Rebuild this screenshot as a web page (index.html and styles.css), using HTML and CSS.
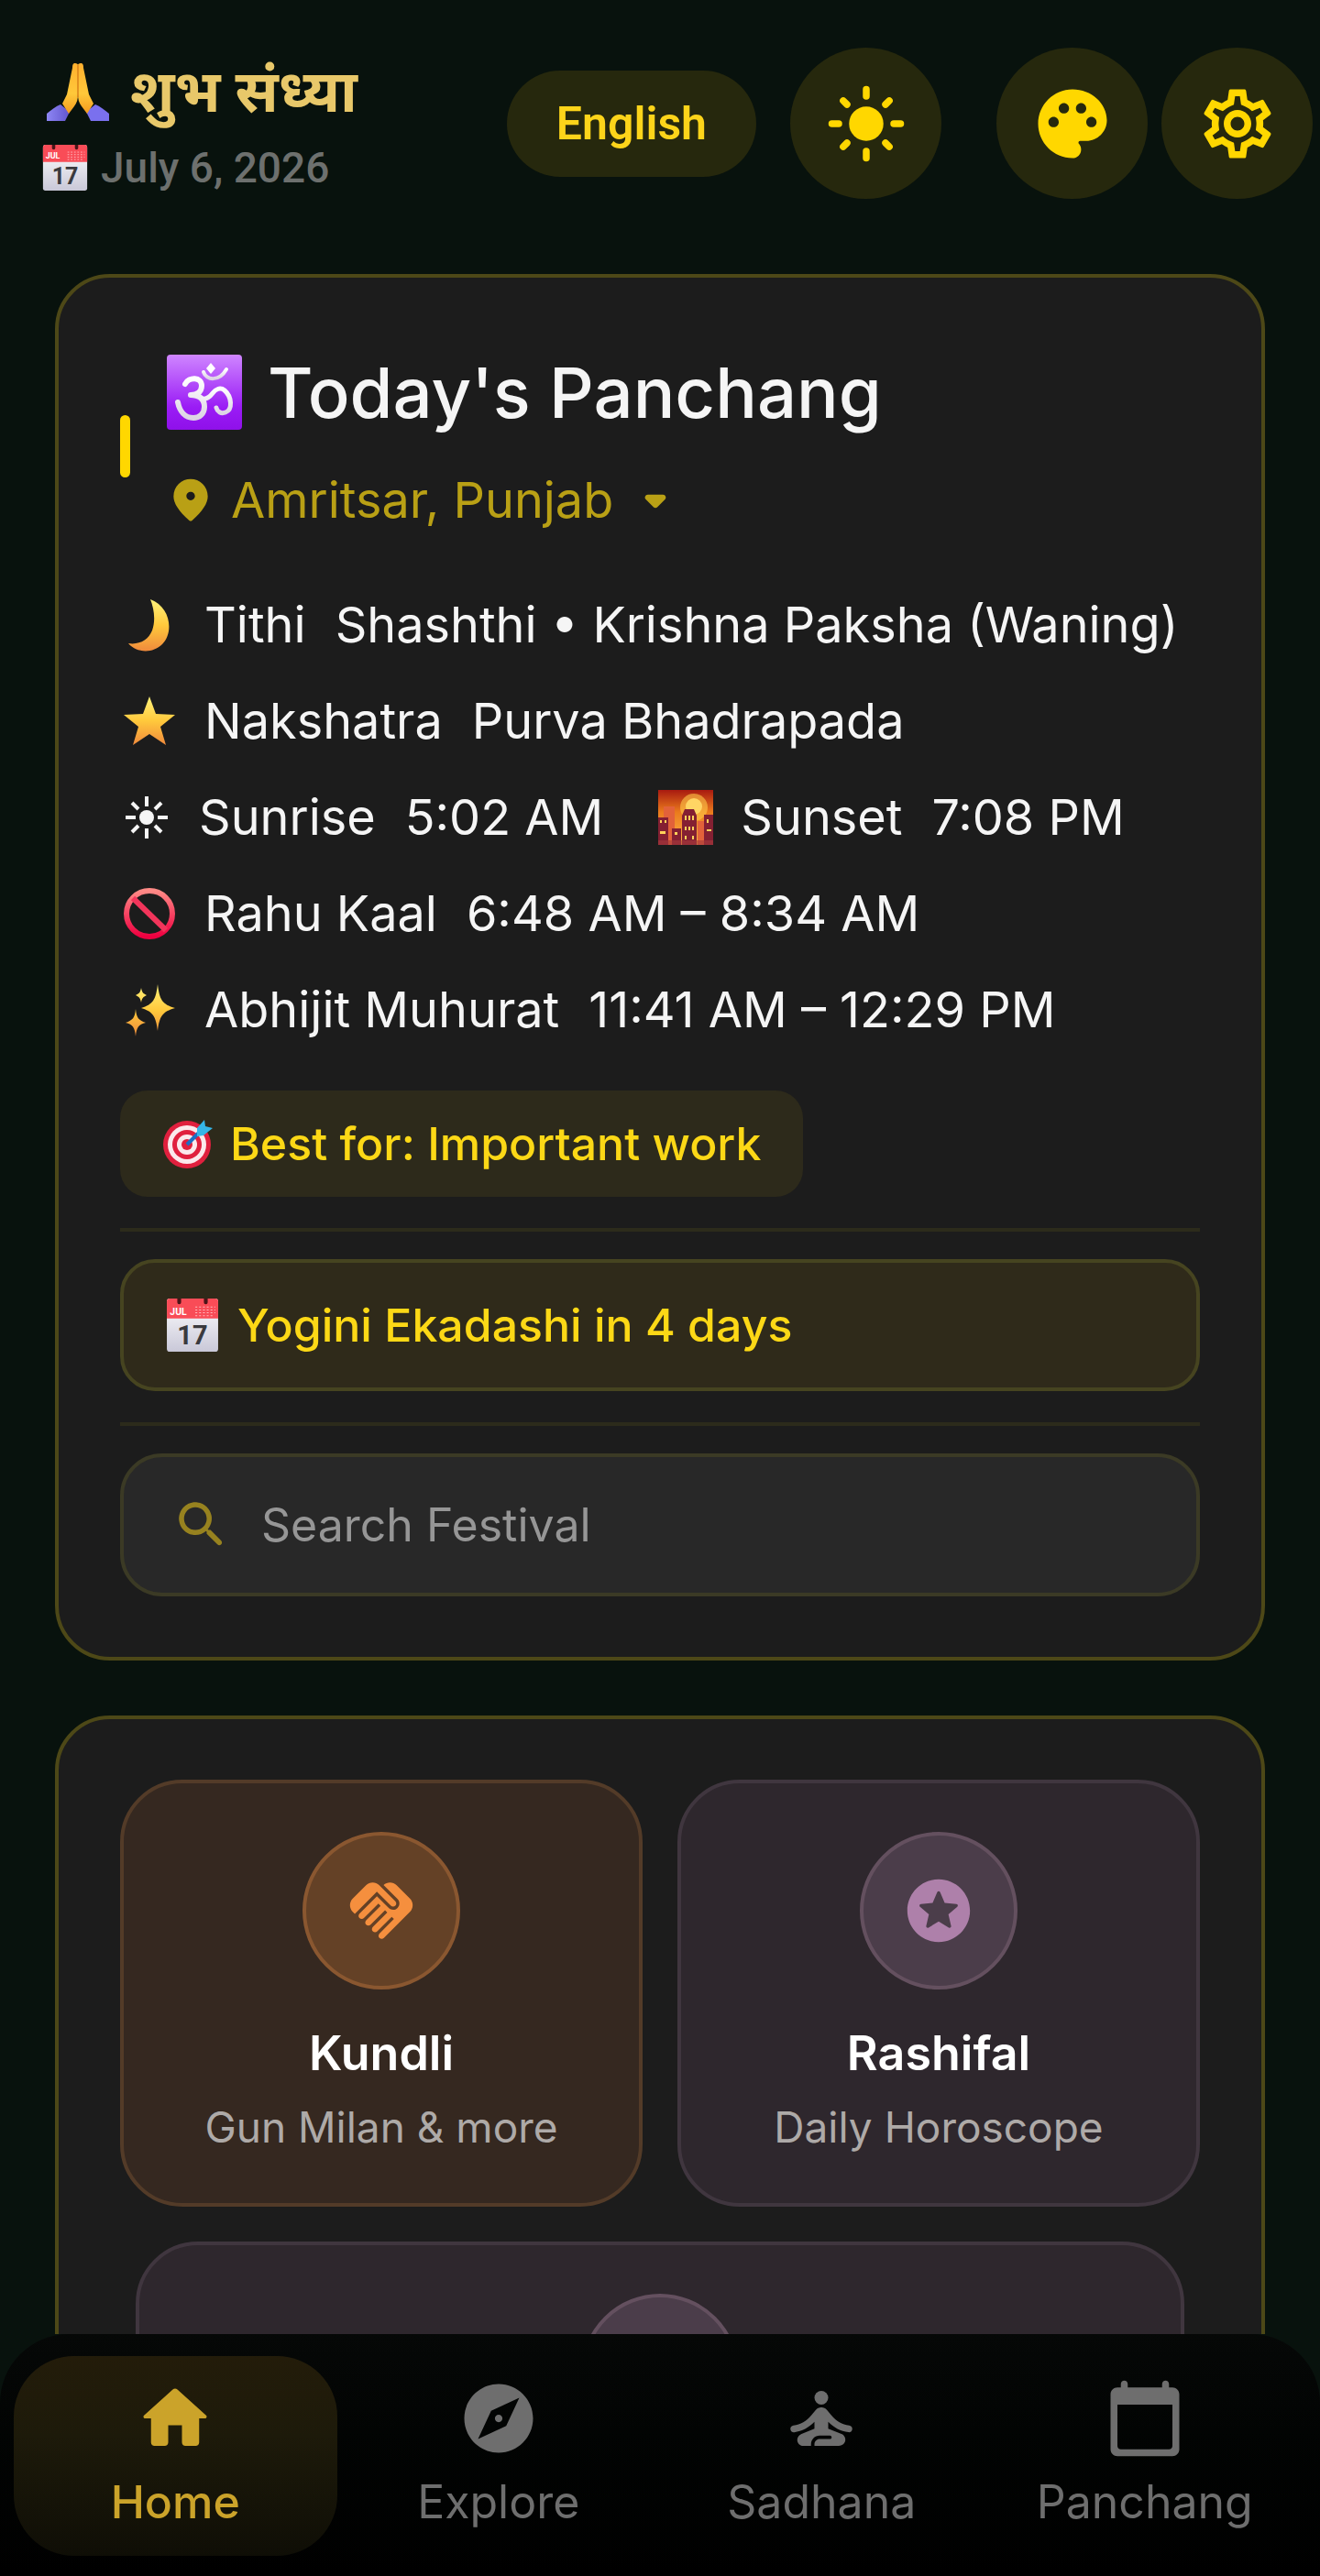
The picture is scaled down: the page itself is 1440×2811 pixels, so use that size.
FILE: index.html
```html
<!DOCTYPE html>
<html lang="en">
<head>
	<meta charset="utf-8">
	<meta name="viewport" content="width=device-width, initial-scale=1">
	<title>Today's Panchang</title>
	<link rel="stylesheet" href="styles.css">
</head>
<body>
	<!-- shared drawings -->
	<svg class="defs" width="0" height="0" aria-hidden="true">
		<defs>
			<linearGradient id="gold" x1="0" y1="0" x2="0" y2="1">
				<stop offset="0" stop-color="#fff27a"/>
				<stop offset="0.5" stop-color="#ffc93c"/>
				<stop offset="1" stop-color="#f08a3c"/>
			</linearGradient>
			<linearGradient id="skin" x1="0" y1="0" x2="0" y2="1">
				<stop offset="0" stop-color="#ffb02e"/>
				<stop offset="0.6" stop-color="#ffc83a"/>
				<stop offset="1" stop-color="#f39a1e"/>
			</linearGradient>
			<linearGradient id="sleeve" x1="0" y1="0" x2="1" y2="0">
				<stop offset="0" stop-color="#8d86f4"/>
				<stop offset="1" stop-color="#6255cc"/>
			</linearGradient>
			<linearGradient id="purple" x1="0" y1="0" x2="0" y2="1">
				<stop offset="0" stop-color="#cf86ff"/>
				<stop offset="0.7" stop-color="#9a1cf5"/>
				<stop offset="1" stop-color="#8f10ea"/>
			</linearGradient>
			<linearGradient id="omwhite" x1="0" y1="0" x2="0" y2="1">
				<stop offset="0" stop-color="#ffffff"/>
				<stop offset="1" stop-color="#dcd4e4"/>
			</linearGradient>
			<linearGradient id="paper" x1="0" y1="0" x2="0" y2="1">
				<stop offset="0" stop-color="#ffffff"/>
				<stop offset="1" stop-color="#c9c8d8"/>
			</linearGradient>
			<linearGradient id="ban" x1="0" y1="0" x2="0" y2="1">
				<stop offset="0" stop-color="#ff8a86"/>
				<stop offset="1" stop-color="#ee0040"/>
			</linearGradient>
			<linearGradient id="dusk" x1="0" y1="0" x2="0" y2="1">
				<stop offset="0" stop-color="#a81a10"/>
				<stop offset="0.4" stop-color="#ea7a1c"/>
				<stop offset="1" stop-color="#ffb648"/>
			</linearGradient>
			<symbol id="calendar" viewBox="0 0 56 56">
				<rect x="1" y="0" width="54" height="56" rx="3" fill="url(#paper)"/>
				<path d="M4 0h48a3 3 0 0 1 3 3v18H1V3a3 3 0 0 1 3-3z" fill="#f94c57"/>
				<path d="M12 0h4v4a2 2 0 0 1-4 0zM40 0h4v4a2 2 0 0 1-4 0z" fill="#4a1418"/>
				<path d="M31 9h21M31 12h21M31 15h21M31 18h18" stroke="#ffb9bd" stroke-width="1" stroke-dasharray="2 2"/>
				<text x="13" y="17" class="cal-month">JUL</text>
				<text x="28" y="48" class="cal-day">17</text>
			</symbol>
		</defs>
	</svg>

	<header class="topbar">
		<div class="greeting">
			<h1 class="greeting-text">
				<svg class="emoji-hands" viewBox="0 0 70 66" aria-hidden="true">
					<path d="M1 64v-8c5-4 10-8 15-10l10 8-5 10z" fill="url(#sleeve)"/>
					<path d="M69 64v-8c-5-4-10-8-15-10l-10 8 5 10z" fill="#7a70ee"/>
					<path d="M32 1c-2 0-3 1-3 5l-6 29-5 10 7 11 6-8c3-4 4-8 4-13V3c0-1-1-2-3-2z" fill="url(#skin)"/>
					<path d="M38 1c2 0 3 1 3 5l6 29 5 10-7 11-6-8c-3-4-4-8-4-13V3c0-1 1-2 3-2z" fill="url(#skin)"/>
					<path d="M35 3v35" stroke="#d9821a" stroke-width="1.5"/>
				</svg>
				<span lang="hi">शुभ संध्या</span>
			</h1>
			<p class="date"><svg class="emoji-date" aria-hidden="true"><use href="#calendar"/></svg>July 6, 2026</p>
		</div>
		<div class="actions">
			<button class="lang-button" type="button">English</button>
			<button class="round-button mode-button" type="button" aria-label="Light mode">
				<svg viewBox="0 0 24 24"><circle cx="12" cy="12" r="5"/><path class="rays" d="M12 2v2M12 20v2M2 12h2M20 12h2M5.3 5.3l1.1 1.1M17.6 17.6l1.1 1.1M18.7 5.3l-1.1 1.1M6.4 17.6l-1.1 1.1"/></svg>
			</button>
			<button class="round-button" type="button" aria-label="Theme colours">
				<svg viewBox="0 0 24 24"><path d="M12 2C6.49 2 2 6.49 2 12s4.49 10 10 10c1.38 0 2.5-1.12 2.5-2.5 0-.61-.23-1.2-.64-1.67-.08-.1-.13-.21-.13-.33 0-.28.22-.5.5-.5H16c3.31 0 6-2.69 6-6 0-4.96-4.49-9-10-9zm5.5 11c-.83 0-1.5-.67-1.5-1.5s.67-1.5 1.5-1.5 1.5.67 1.5 1.5-.67 1.5-1.5 1.5zm-3-4c-.83 0-1.5-.67-1.5-1.5S13.67 6 14.5 6s1.5.67 1.5 1.5S15.33 9 14.5 9zM5 11.5c0-.83.67-1.5 1.5-1.5s1.5.67 1.5 1.5S7.33 13 6.5 13 5 12.33 5 11.5zm6-4c0 .83-.67 1.5-1.5 1.5S8 8.33 8 7.5 8.67 6 9.5 6s1.5.67 1.5 1.5z"/></svg>
			</button>
			<button class="round-button" type="button" aria-label="Settings">
				<svg viewBox="0 0 24 24"><path d="M19.43 12.98c.04-.32.07-.64.07-.98s-.03-.66-.07-.98l2.11-1.65c.19-.15.24-.42.12-.64l-2-3.46c-.09-.16-.26-.25-.44-.25-.06 0-.12.01-.17.03l-2.49 1c-.52-.4-1.08-.73-1.69-.98l-.38-2.65C14.46 2.18 14.25 2 14 2h-4c-.25 0-.46.18-.49.42l-.38 2.65c-.61.25-1.17.59-1.69.98l-2.49-1c-.06-.02-.12-.03-.18-.03-.17 0-.34.09-.43.25l-2 3.46c-.13.22-.07.49.12.64l2.11 1.65c-.04.32-.07.65-.07.98s.03.66.07.98l-2.11 1.65c-.19.15-.24.42-.12.64l2 3.46c.09.16.26.25.44.25.06 0 .12-.01.17-.03l2.49-1c.52.4 1.08.73 1.69.98l.38 2.65c.03.24.24.42.49.42h4c.25 0 .46-.18.49-.42l.38-2.65c.61-.25 1.17-.59 1.69-.98l2.49 1c.06.02.12.03.18.03.17 0 .34-.09.43-.25l2-3.46c.12-.22.07-.49-.12-.64l-2.11-1.65zm-1.98-1.71c.04.31.05.52.05.73 0 .21-.02.43-.05.73l-.14 1.13.89.7 1.08.84-.7 1.21-1.27-.51-1.04-.42-.9.68c-.43.32-.84.56-1.25.73l-1.06.43-.16 1.13-.2 1.35h-1.4l-.19-1.35-.16-1.13-1.06-.43c-.43-.18-.83-.41-1.23-.71l-.91-.7-1.06.43-1.27.51-.7-1.21 1.08-.84.89-.7-.14-1.13c-.03-.31-.05-.54-.05-.74s.02-.43.05-.73l.14-1.13-.89-.7-1.08-.84.7-1.21 1.27.51 1.04.42.9-.68c.43-.32.84-.56 1.25-.73l1.06-.43.16-1.13.2-1.35h1.39l.19 1.35.16 1.13 1.06.43c.43.18.83.41 1.23.71l.91.7 1.06-.43 1.27-.51.7 1.21-1.07.85-.89.7.14 1.13zM12 8c-2.21 0-4 1.79-4 4s1.79 4 4 4 4-1.79 4-4-1.79-4-4-4zm0 6c-1.1 0-2-.9-2-2s.9-2 2-2 2 .9 2 2-.9 2-2 2z"/></svg>
			</button>
		</div>
	</header>

	<main class="content">
		<section class="card panchang">
			<div class="card-head">
				<span class="accent"></span>
				<div class="card-title">
					<h2>
						<svg class="emoji-om" viewBox="0 0 82 82" aria-hidden="true">
							<rect width="82" height="82" rx="4" fill="url(#purple)"/>
							<g fill="none" stroke="url(#omwhite)" stroke-linecap="round" stroke-linejoin="round">
								<path d="M20 32c4-8 18-8 18 2 0 8-7 10-12 10 8 0 15 3 15 13 0 8-6 12-12 12-9 0-15-7-17-17" stroke-width="6"/>
								<path d="M39 48c5 1 8-2 11-6s8-7 13-3c8 7 9 21 1 24-5 2-9-1-10-5" stroke-width="5"/>
								<path d="M40 19c3 9 17 11 25-3" stroke-width="4"/>
							</g>
							<path d="M48 9l5 6-5 6-5-6z" fill="#fff"/>
						</svg>
						Today's Panchang
					</h2>
					<button class="place" type="button">
						<svg class="pin" viewBox="0 0 24 24"><path d="M12 2c-4.2 0-8 3.22-8 8.2 0 3.18 2.45 6.92 7.34 11.23.38.33.95.33 1.33 0C17.55 17.12 20 13.38 20 10.2 20 5.22 16.2 2 12 2zm0 10c-1.1 0-2-.9-2-2s.9-2 2-2 2 .9 2 2-.9 2-2 2z"/></svg>
						Amritsar, Punjab
						<svg class="caret" viewBox="0 0 24 24"><path d="M8.71 11.71l2.59 2.59c.39.39 1.02.39 1.41 0l2.59-2.59c.63-.63.18-1.71-.71-1.71H9.41c-.89 0-1.33 1.08-.7 1.71z"/></svg>
					</button>
				</div>
			</div>

			<ul class="facts">
				<li>
					<svg class="emoji" viewBox="0 0 60 60" aria-hidden="true"><path d="M31 2c22 8 26 36 13 49-11 11-29 9-37-1 12 2 22-4 26-14 4-11 2-24-2-34z" fill="url(#gold)"/></svg>
					<span>Tithi</span><span>Shashthi • Krishna Paksha (Waning)</span>
				</li>
				<li>
					<svg class="emoji" viewBox="0 0 60 60" aria-hidden="true"><path d="M30 3l7 19 21 1-16 13 6 20-18-12-18 12 6-20L2 23l21-1z" fill="url(#gold)"/></svg>
					<span>Nakshatra</span><span>Purva Bhadrapada</span>
				</li>
				<li>
					<svg class="emoji sun" viewBox="0 0 52 60" aria-hidden="true"><circle cx="26" cy="30" r="8" fill="#f5f5f5"/><path d="M26 7v11M26 42v11M3 30h11M38 30h11M10 14l7 7M35 39l7 7M42 14l-7 7M17 39l-7 7" stroke="#f5f5f5" stroke-width="4"/></svg>
					<span>Sunrise</span><span>5:02 AM</span>
					<svg class="emoji city" viewBox="0 0 60 60" aria-hidden="true">
						<rect width="60" height="60" fill="url(#dusk)"/>
						<circle cx="39" cy="19" r="15" fill="#ffc94a" opacity=".6"/>
						<circle cx="39" cy="18" r="9" fill="#ffd564"/>
						<path d="M6 18h12v42H6zM43 34h9v26h-9z" fill="#e2623a"/>
						<path d="M0 30h11v30H0zM26 28l3-7h10l3 7v32H26zM15 42h10v18H15zM50 27h10v33H50z" fill="#842032"/>
						<path d="M29 28h2v5h-2zM33 28h2v5h-2zM37 28h2v5h-2zM29 40h2v4h-2zM33 40h2v4h-2zM37 40h2v4h-2zM29 50h2v4h-2zM37 50h2v4h-2zM2 33h2v3H2zM7 33h2v3H7zM2 45h6v3H2zM18 46h3v3h-3zM53 32h2v4h-2zM53 43h5v2h-5z" fill="#ffd25a"/>
						<path d="M0 55h60v5H0z" fill="#a53a3c" opacity=".6"/>
					</svg>
					<span>Sunset</span><span>7:08 PM</span>
				</li>
				<li>
					<svg class="emoji" viewBox="0 0 60 60" aria-hidden="true"><g fill="none" stroke="url(#ban)" stroke-width="6"><circle cx="30" cy="30" r="25"/><path d="M12 13l36 35" stroke="#f2355b"/></g></svg>
					<span>Rahu Kaal</span><span>6:48 AM – 8:34 AM</span>
				</li>
				<li>
					<svg class="emoji" viewBox="0 0 60 60" aria-hidden="true"><path d="M39 2c2 17 5 22 19 26-14 4-17 9-19 25-2-16-5-21-18-25 13-4 16-9 18-26zM15 29c1 10 3 12 11 15-8 2-10 5-11 15-1-10-3-13-11-15 8-3 10-5 11-15zM21 6c1 5 2 6 6 8-4 2-5 3-6 8-1-5-2-6-6-8 4-2 5-3 6-8z" fill="url(#gold)"/></svg>
					<span>Abhijit Muhurat</span><span>11:41 AM – 12:29 PM</span>
				</li>
			</ul>

			<p class="best">
				<svg class="emoji-target" viewBox="0 0 56 56" aria-hidden="true">
					<circle cx="27" cy="29" r="26" fill="#e0203e"/><circle cx="27" cy="29" r="21" fill="#fbe9ec"/><circle cx="27" cy="29" r="16" fill="#e0203e"/><circle cx="27" cy="29" r="11" fill="#fbe9ec"/><circle cx="27" cy="29" r="6" fill="#e0203e"/>
					<path d="M27 29L45 11" stroke="#1d6fc4" stroke-width="4"/>
					<path d="M38 11l8-9 1 7 8 2-10 8-7 1z" fill="#35b6e8"/>
				</svg>
				Best for: Important work
			</p>

			<hr>
			<p class="upcoming"><svg class="emoji-event" aria-hidden="true"><use href="#calendar"/></svg>Yogini Ekadashi in 4 days</p>
			<hr>

			<label class="search">
				<svg viewBox="0 0 24 24" aria-hidden="true"><path d="M15.5 14h-.79l-.28-.27c1.2-1.4 1.82-3.31 1.48-5.34-.47-2.78-2.79-5-5.59-5.34-4.23-.52-7.79 3.04-7.27 7.27.34 2.8 2.56 5.12 5.34 5.59 2.03.34 3.94-.28 5.34-1.48l.27.28v.79l4.25 4.25c.41.41 1.08.41 1.49 0 .41-.41.41-1.08 0-1.49L15.5 14zm-6 0C7.01 14 5 11.99 5 9.5S7.01 5 9.5 5 14 7.01 14 9.5 11.99 14 9.5 14z"/></svg>
				<input type="text" placeholder="Search Festival" aria-label="Search Festival">
			</label>
		</section>

		<section class="card services">
			<a class="tile orange" href="#kundli">
				<span class="tile-icon">
					<svg viewBox="0 0 24 24"><path d="M16.48 10.41c-.39.39-1.04.39-1.43 0l-4.47-4.46-7.05 7.04-.66-.63c-1.17-1.17-1.17-3.07 0-4.24l4.24-4.24c1.17-1.17 3.07-1.17 4.24 0L16.48 9c.39.39.39 1.02 0 1.41zm.7-2.12c.78.78.78 2.05 0 2.83-1.27 1.27-2.61.22-2.83 0l-3.76-3.76-5.57 5.57c-.39.39-.39 1.02 0 1.41.39.39 1.02.39 1.42 0l4.62-4.62.71.71-4.62 4.62c-.39.39-.39 1.02 0 1.41.39.39 1.02.39 1.42 0l4.62-4.62.71.71-4.62 4.62c-.39.39-.39 1.02 0 1.41.39.39 1.02.39 1.41 0l4.62-4.62.71.71-4.62 4.62c-.39.39-.39 1.02 0 1.41.39.39 1.02.39 1.41 0l8.32-8.34c1.17-1.17 1.17-3.07 0-4.24l-4.24-4.24c-1.15-1.15-3.01-1.17-4.18-.06l4.47 4.47z"/></svg>
				</span>
				<strong>Kundli</strong>
				<small>Gun Milan &amp; more</small>
			</a>
			<a class="tile purple" href="#rashifal">
				<span class="tile-icon">
					<svg viewBox="0 0 24 24"><path d="M11.99 2C6.47 2 2 6.48 2 12s4.47 10 9.99 10C17.52 22 22 17.52 22 12S17.52 2 11.99 2zm3.23 15.39L12 15.45l-3.22 1.94c-.38.23-.85-.11-.75-.54l.85-3.66-2.83-2.45c-.33-.29-.15-.84.29-.88l3.74-.32 1.46-3.45c.17-.41.75-.41.92 0l1.46 3.44 3.74.32c.44.04.62.59.28.88l-2.83 2.45.85 3.67c.1.43-.36.77-.74.54z"/></svg>
				</span>
				<strong>Rashifal</strong>
				<small>Daily Horoscope</small>
			</a>
			<a class="tile purple wide" href="#more" aria-label="More">
				<span class="tile-icon"></span>
			</a>
		</section>
	</main>

	<nav class="tabs">
		<a class="tab active" href="#home">
			<svg viewBox="0 0 24 24"><path d="M10 19v-5h4v5c0 .55.45 1 1 1h3c.55 0 1-.45 1-1v-7h1.7c.46 0 .68-.57.33-.87L12.67 3.6c-.38-.34-.96-.34-1.34 0l-8.36 7.53c-.34.3-.13.87.33.87H5v7c0 .55.45 1 1 1h3c.55 0 1-.45 1-1z"/></svg>
			Home
		</a>
		<a class="tab" href="#explore">
			<svg viewBox="0 0 24 24"><path d="M12 10.9c-.61 0-1.1.49-1.1 1.1s.49 1.1 1.1 1.1c.61 0 1.1-.49 1.1-1.1s-.49-1.1-1.1-1.1zM12 2C6.48 2 2 6.48 2 12s4.48 10 10 10 10-4.48 10-10S17.52 2 12 2zm2.19 12.19L6 18l3.81-8.19L18 6l-3.81 8.19z"/></svg>
			Explore
		</a>
		<a class="tab" href="#sadhana">
			<svg viewBox="0 0 24 24"><circle cx="12" cy="6" r="2"/><path d="M21 15.04c0-.51-.37-.93-.87-.99-2.11-.27-3.78-1.28-5.18-2.95l-1.34-1.6c-.38-.46-.94-.72-1.53-.72h-.15c-.59 0-1.15.26-1.53.72l-1.34 1.6c-1.4 1.67-3.07 2.68-5.19 2.95-.5.06-.87.48-.87.99 0 .6.52 1.07 1.12 1 2.3-.29 4.21-1.33 5.88-3.03V15l-3.76 1.5c-.65.26-1.15.85-1.23 1.55-.12 1.06.7 1.95 1.73 1.95H9v-.5c0-1.38 1.12-2.5 2.5-2.5h3c.28 0 .5.22.5.5s-.22.5-.5.5h-3c-.83 0-1.5.67-1.5 1.5v.5h7.1c.85 0 1.65-.55 1.85-1.38.21-.89-.26-1.77-1.08-2.1L14 15v-1.99c1.67 1.7 3.57 2.73 5.88 3.02.6.08 1.12-.39 1.12-.99z"/></svg>
			Sadhana
		</a>
		<a class="tab" href="#panchang">
			<svg viewBox="0 0 24 24"><path d="M20 3h-1V2c0-.55-.45-1-1-1s-1 .45-1 1v1H7V2c0-.55-.45-1-1-1s-1 .45-1 1v1H4c-1.1 0-2 .9-2 2v16c0 1.1.9 2 2 2h16c1.1 0 2-.9 2-2V5c0-1.1-.9-2-2-2zm-1 18H5c-.55 0-1-.45-1-1V8h16v12c0 .55-.45 1-1 1z"/></svg>
			Panchang
		</a>
	</nav>
</body>
</html>
```

FILE: styles.css
```css
* {
	box-sizing: border-box;
}
body {
	margin: 0;
	height: 100vh;
	display: flex;
	flex-direction: column;
	overflow: hidden;
	background: #08120d;
	color: #f5f5f5;
	font-family: Inter, Roboto, sans-serif;
	font-size: 54px;
	line-height: 64px;
}
h1, h2, p, ul {
	margin: 0;
	padding: 0;
}
a {
	color: inherit;
	text-decoration: none;
}
button {
	border: 0;
	padding: 0;
	background: none;
	font: inherit;
	cursor: pointer;
}
svg {
	display: block;
	flex: none;
	fill: currentColor;
}
.defs {
	position: absolute;
}

/* header */
.topbar {
	display: flex;
	justify-content: space-between;
	align-items: center;
	padding: 52px 8px 82px 46px;
}
.greeting {
	display: flex;
	flex-direction: column;
	gap: 8px;
	padding-top: 4px;
}
.greeting-text {
	display: flex;
	align-items: center;
	gap: 22px;
	color: #e8c86a;
	font-family: Roboto, "Noto Sans Devanagari", "Noto Sans", sans-serif;
	font-size: 64px;
	font-weight: 700;
	line-height: 84px;
}
.emoji-hands {
	width: 70px;
	height: 66px;
	margin-left: 4px;
}
.date {
	display: flex;
	align-items: center;
	gap: 14px;
	color: #6d706e;
	font-family: Roboto, sans-serif;
	font-size: 46px;
	font-weight: 500;
}
.emoji-date {
	width: 50px;
	height: 50px;
}
.actions {
	display: flex;
	align-items: center;
	gap: 15px;
	color: #ffd700;
}
.lang-button {
	padding: 26px 54px;
	border-radius: 58px;
	background: #26280d;
	color: #fcd41a;
	font-family: Roboto, sans-serif;
	font-size: 50px;
	font-weight: 600;
}
.round-button {
	display: flex;
	align-items: center;
	justify-content: center;
	width: 165px;
	height: 165px;
	border-radius: 50%;
	background: #26280d;
	color: #ffd700;
}
.round-button svg {
	width: 90px;
	height: 90px;
}
.mode-button {
	margin: 0 45px 0 22px;
}
.rays {
	fill: none;
	stroke: currentColor;
	stroke-width: 2;
	stroke-linecap: round;
}

/* cards */
.content {
	flex: 1;
	min-height: 0;
	overflow: hidden;
	padding: 0 60px;
}
.card {
	border: 4px solid #4d4817;
	border-radius: 60px;
	background: #1c1c1c;
	padding: 66px 67px;
	margin-bottom: 60px;
}
.card-head {
	display: flex;
	align-items: center;
	gap: 38px;
}
.accent {
	width: 11px;
	height: 68px;
	border-radius: 6px;
	background: #ffd700;
}
.card-title h2 {
	display: flex;
	align-items: center;
	gap: 28px;
	font-size: 76px;
	font-weight: 500;
	line-height: 118px;
}
.emoji-om {
	width: 82px;
	height: 82px;
	margin-left: 2px;
}
.place {
	display: flex;
	align-items: center;
	height: 118px;
	color: #b9a015;
}
.pin {
	width: 56px;
	height: 56px;
	margin-right: 16px;
}
.caret {
	width: 76px;
	height: 76px;
	margin-left: 8px;
}

.facts {
	list-style: none;
	padding-top: 24px;
}
.facts li {
	display: flex;
	align-items: center;
	height: 105px;
	white-space: nowrap;
}
.facts span + span {
	margin-left: 32px;
}
.emoji {
	width: 60px;
	height: 60px;
	margin: 0 30px 0 2px;
}
.sun {
	width: 54px;
}
.city {
	margin-left: 60px;
}

.best {
	display: flex;
	align-items: center;
	gap: 18px;
	width: fit-content;
	margin-top: 36px;
	padding: 26px 46px;
	border-radius: 30px;
	background: #2d2a1b;
	color: #fcd816;
	font-size: 50px;
	font-weight: 500;
}
.emoji-target {
	width: 56px;
	height: 56px;
}
hr {
	height: 4px;
	margin: 34px 0 30px;
	border: 0;
	background: #2c2b1b;
}
.upcoming {
	display: flex;
	align-items: center;
	gap: 20px;
	padding: 36px 46px;
	border: 4px solid #464420;
	border-radius: 38px;
	background: #2f2a1a;
	color: #fcd816;
	font-size: 50px;
	font-weight: 500;
}
.emoji-event {
	width: 58px;
	height: 58px;
}
.cal-month {
	fill: #fff;
	font: 700 10px Roboto, sans-serif;
	text-anchor: middle;
}
.cal-day {
	fill: #3a3a3e;
	font: 700 28px Roboto, sans-serif;
	text-anchor: middle;
}
.search {
	display: flex;
	align-items: center;
	gap: 32px;
	padding: 41px 52px;
	border: 4px solid #3b3a25;
	border-radius: 46px;
	background: #282828;
}
.search svg {
	width: 66px;
	height: 66px;
	color: #97821f;
}
.search input {
	flex: 1;
	min-width: 0;
	height: 64px;
	padding: 0;
	border: 0;
	outline: 0;
	background: none;
	color: #f5f5f5;
	font: inherit;
	font-size: 50px;
}
.search input::placeholder {
	color: #969696;
	opacity: 1;
}

/* tiles */
.services {
	display: grid;
	grid-template-columns: 1fr 1fr;
	gap: 38px;
}
.tile {
	display: flex;
	flex-direction: column;
	align-items: center;
	height: 466px;
	padding-top: 53px;
	border: 4px solid;
	border-radius: 68px;
}
.tile-icon {
	display: flex;
	align-items: center;
	justify-content: center;
	width: 172px;
	height: 172px;
	margin-bottom: 38px;
	border: 4px solid;
	border-radius: 50%;
}
.tile-icon svg {
	width: 82px;
	height: 82px;
}
.tile strong {
	color: #fff;
	font-size: 52px;
	font-weight: 600;
}
.tile small {
	margin-top: 16px;
	color: #aeaaa8;
	font-size: 46px;
}
.orange {
	border-color: #533b28;
	background: #352820;
}
.orange .tile-icon {
	border-color: #8a5730;
	background: #644126;
	color: #f58f3e;
}
.purple {
	border-color: #40363f;
	background: #2e272d;
}
.purple .tile-icon {
	border-color: #64505f;
	background: #4b3d4a;
	color: #ae80aa;
}
.wide {
	grid-column: 1 / 3;
	margin: 0 17px;
}

/* bottom tabs */
.tabs {
	display: flex;
	padding: 24px 15px 22px;
	border-radius: 75px 75px 0 0;
	background: linear-gradient(#060807, #020403 40%, #000);
	color: #6e6e6e;
}
.tab {
	flex: 1;
	display: flex;
	flex-direction: column;
	align-items: center;
	gap: 14px;
	height: 218px;
	padding-top: 23px;
	border-radius: 66px;
	font-size: 50px;
}
.tab svg {
	width: 90px;
	height: 90px;
}
.active {
	background: linear-gradient(#231c0a, #1d1a0a 40%, #0f0e06);
	color: #cba32a;
	font-weight: 500;
}
```
